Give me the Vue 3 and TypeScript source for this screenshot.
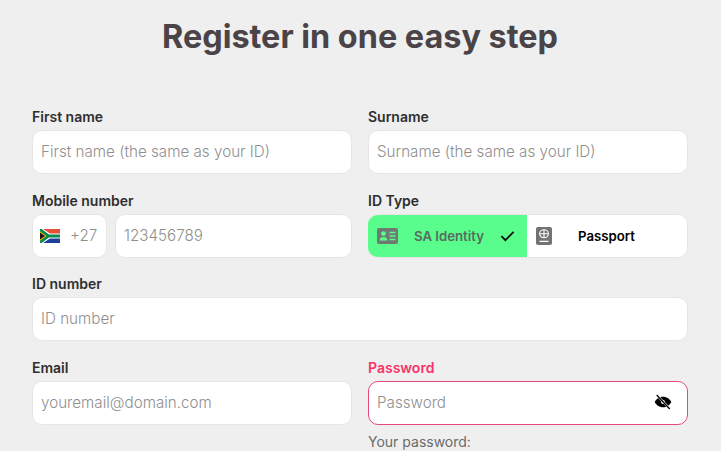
<script setup lang="ts">
</script>

<template>
  <main class="page">
    <h1 class="title">Register in one easy step</h1>
    <form class="grid">
      <div class="field">
        <label class="label">First name</label>
        <input class="input" placeholder="First name (the same as your ID)" />
      </div>
      <div class="field">
        <label class="label">Surname</label>
        <input class="input" placeholder="Surname (the same as your ID)" />
      </div>
      <div class="field">
        <label class="label">Mobile number</label>
        <div class="phone">
          <div class="code">
            <svg class="flag" viewBox="0 0 20 14" width="20" height="14">
              <rect width="20" height="7" fill="#e8503a" />
              <rect y="7" width="20" height="7" fill="#1e3f9e" />
              <path d="M0 0h3l7 4.6h10v4.8H10L3 14H0z" fill="#fff" />
              <path d="M0 0h1.5L9 5.6h11v2.8H9L1.5 14H0z" fill="#078a4e" />
              <path d="M0 2.2 L6.5 7 L0 11.8Z" fill="#ffb915" />
              <path d="M0 3.4 L5 7 L0 10.6Z" fill="#1a1a1a" />
            </svg>
            <span class="dial">+27</span>
          </div>
          <input class="input number" placeholder="123456789" />
        </div>
      </div>
      <div class="field">
        <label class="label">ID Type</label>
        <div class="toggle">
          <button type="button" class="opt active">
            <svg class="glyph" viewBox="0 0 21 16" width="21" height="16">
              <rect width="21" height="16" rx="2" fill="#6e7a72" />
              <circle cx="6.5" cy="5.6" r="2.4" fill="#58fd8c" />
              <path d="M2.6 12.6c0-2.6 1.8-3.6 3.9-3.6s3.9 1 3.9 3.6z" fill="#58fd8c" />
              <path d="M12.5 4.5h6M12.5 8h6M12.5 11.5h6" stroke="#58fd8c" stroke-width="1.3" />
            </svg>
            <span class="opt-text">SA Identity</span>
            <svg class="check" viewBox="0 0 16 12" width="15" height="12">
              <path d="M1.5 6.2 L5.8 10.4 L14.5 1.6" fill="none" stroke="#111" stroke-width="2" />
            </svg>
          </button>
          <button type="button" class="opt">
            <svg class="glyph" viewBox="0 0 16 18" width="16" height="18">
              <rect width="16" height="18" rx="2" fill="#737373" />
              <ellipse cx="8" cy="6.8" rx="4.4" ry="4" fill="none" stroke="#fff" stroke-width="1.1" />
              <path d="M3.6 6.8h8.8M8 2.8v8" stroke="#fff" stroke-width="1.1" />
              <path d="M3.5 14.4h9" stroke="#fff" stroke-width="1.4" />
            </svg>
            <span class="opt-text dark">Passport</span>
          </button>
        </div>
      </div>
      <div class="field wide">
        <label class="label">ID number</label>
        <input class="input" placeholder="ID number" />
      </div>
      <div class="field">
        <label class="label">Email</label>
        <input class="input" placeholder="youremail@domain.com" />
      </div>
      <div class="field">
        <label class="label error">Password</label>
        <div class="pw">
          <input class="input pw-input" placeholder="Password" />
          <svg class="eye" viewBox="0 0 24 24" width="18" height="18">
            <path d="M12 5C6.5 5 2.6 8.4 1 12c1.6 3.6 5.5 7 11 7s9.4-3.4 11-7c-1.6-3.6-5.5-7-11-7z" fill="#000" />
            <circle cx="12" cy="12" r="2.6" fill="#fff" />
            <path d="M4 3 L21 21" stroke="#fff" stroke-width="3" />
            <path d="M3.6 2.6 L21 21.4" stroke="#000" stroke-width="1.7" />
          </svg>
        </div>
        <p class="hint">Your password:</p>
      </div>
    </form>
  </main>
</template>

<style>
html, body { margin: 0; background: #efefef; overflow: hidden; }
</style>

<style scoped>
.page {
  height: 451px;
  overflow: hidden;
  box-sizing: border-box;
  padding: 16px 33px 0 32px;
  font-family: Inter, "Liberation Sans", sans-serif;
  background: #efefef;
}
.title {
  margin: 0 0 50px;
  height: 42px;
  line-height: 42px;
  text-align: center;
  font-size: 32.4px;
  font-weight: 700;
  color: #4a4347;
}
.grid {
  display: grid;
  grid-template-columns: 320px 320px;
  column-gap: 16px;
  row-gap: 17.5px;
}
.field { display: flex; flex-direction: column; min-width: 0; }
.wide { grid-column: 1 / 3; }
.label {
  height: 22px;
  line-height: 18px;
  font-size: 14px;
  font-weight: 600;
  color: #2e2e2e;
}
.label.error { color: #f5336b; }
.input {
  width: 100%;
  height: 44px;
  box-sizing: border-box;
  padding: 0 8px 1px;
  border: 1px solid #e6e6e6;
  border-radius: 10px;
  background: #fff;
  font-family: inherit;
  font-size: 15.2px;
  font-weight: 300;
  outline: none;
}
.input::placeholder { color: #8f8f8f; opacity: 1; }
.phone { display: flex; gap: 8px; }
.code {
  width: 75px;
  height: 44px;
  box-sizing: border-box;
  flex: none;
  display: flex;
  align-items: center;
  gap: 10px;
  padding-left: 7px;
  background: #fff;
  border: 1px solid #e6e6e6;
  border-radius: 10px;
  color: #8f8f8f;
  font-size: 15.2px;
  font-weight: 300;
}
.flag { flex: none; }
.number { flex: 1; }
.toggle {
  display: flex;
  height: 44px;
  border-radius: 10px;
  overflow: hidden;
  border: 1px solid #e6e6e6;
  border-left: 0;
  box-sizing: border-box;
}
.opt {
  flex: 1;
  display: flex;
  align-items: center;
  padding: 0 0 0 9px;
  border: 0;
  background: #fff;
  font-family: inherit;
  font-size: 13.2px;
  font-weight: 600;
}
.opt.active { background: #58fd8c; flex: 0 0 159px; }
.opt-text { color: #5a6a60; margin-left: 16px; }
.opt-text.dark { color: #000; margin-left: 26px; }
.check { margin-left: 16px; }
.pw { position: relative; }
.pw-input { border-color: #e64a78; }
.eye { position: absolute; right: 16px; top: 12px; }
.hint {
  margin: 8px 0 0;
  font-size: 14px;
  line-height: 18px;
  color: #6b6b6b;
}
</style>
